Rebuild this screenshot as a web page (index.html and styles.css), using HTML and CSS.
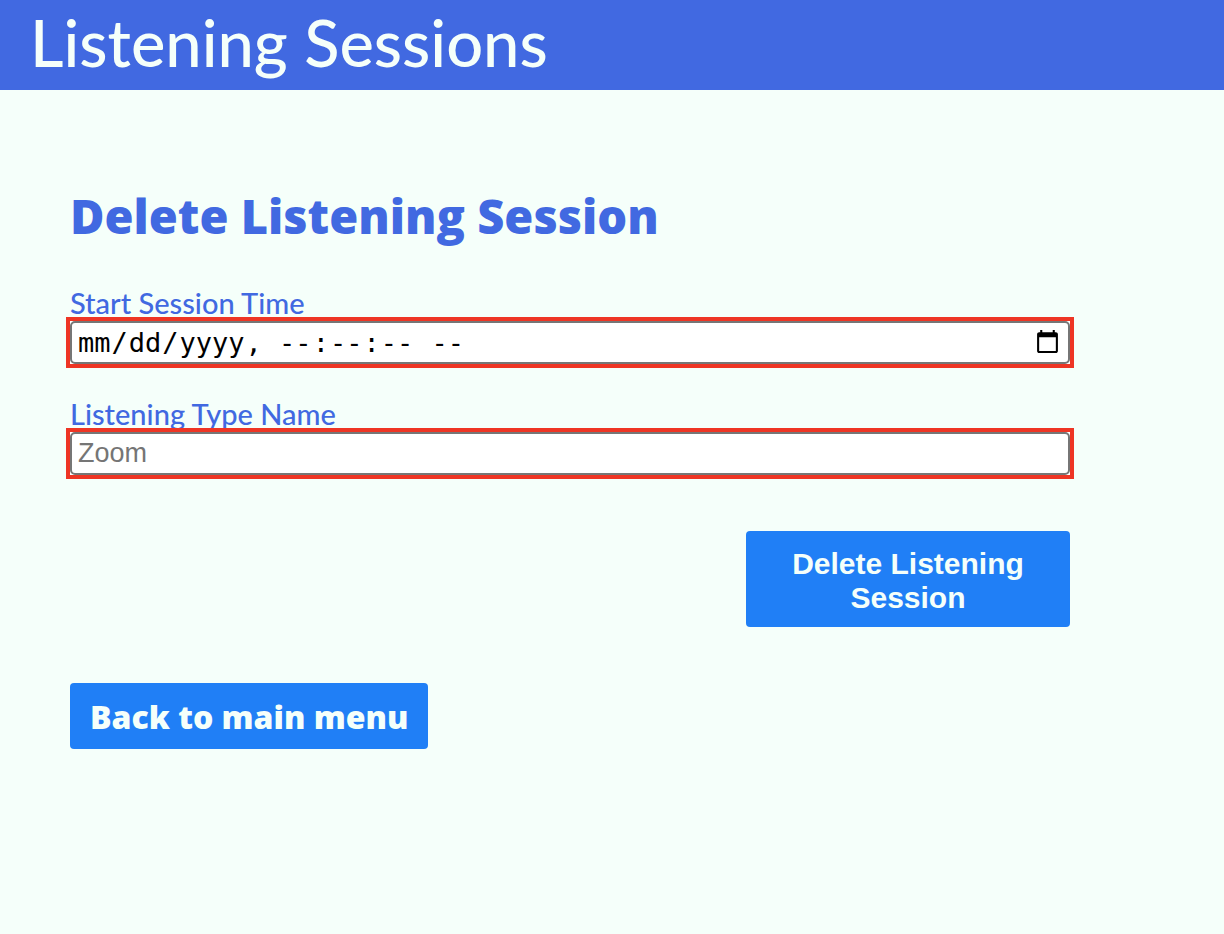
FILE: index.html
```html
<!DOCTYPE html>
<html lang="en">
<head>
<meta charset="utf-8">
<meta name="viewport" content="width=device-width, initial-scale=1">
<title>Listening Sessions</title>
<link rel="stylesheet" href="styles.css">
</head>
<body>
<header class="banner"><h1 class="banner-title">Listening Sessions</h1></header>
<main class="content">
  <h2 class="title">Delete Listening Session</h2>
  <form class="form">
    <div class="field">
      <label class="label" for="start">Start Session Time</label>
      <div class="frame"><input class="input input-date" type="datetime-local" step="1" id="start" name="start" required></div>
    </div>
    <div class="field">
      <label class="label" for="type">Listening Type Name</label>
      <div class="frame"><input class="input" type="text" id="type" name="type" placeholder="Zoom" required></div>
    </div>
    <button class="button submit" type="submit">Delete Listening Session</button>
  </form>
  <a class="button back" href="#">Back to main menu</a>
</main>
</body>
</html>
```

FILE: styles.css
```css
* {
  box-sizing: border-box;
}

body {
  margin: 0;
  background: #f5fffa;
  color: #4169e1;
  font-family: "Gill Sans", Lato, sans-serif;
}

.banner {
  padding: 0 30px 6px;
  background: #4169e1;
  color: #f5fffa;
}

.banner-title {
  margin: 0;
  font-size: 65px;
  font-weight: 500;
  line-height: 84px;
}

.content {
  max-width: 1140px;
  padding: 98px 70px 40px;
}

.title {
  margin: 0 0 41px;
  font-family: "Gill Sans", "Open Sans", sans-serif;
  font-size: 47px;
  font-weight: 800;
  line-height: 56px;
}

.form {
  display: flex;
  flex-direction: column;
}

.field {
  display: flex;
  flex-direction: column;
  margin-bottom: 28px;
}

.label {
  padding-top: 4px;
  font-size: 29px;
  font-weight: 500;
  line-height: 28px;
}

.frame {
  position: relative;
  display: flex;
  margin: 0 -4px;
  border: 4px solid #ee3524;
  background: #fff;
}

.input {
  width: 100%;
  height: 43px;
  padding: 2px 6px;
  border: 2px solid #767676;
  border-radius: 5px;
  background: #fff;
  color: #000;
  font-family: "Liberation Sans", Arial, sans-serif;
  font-size: 27px;
}

.input::placeholder {
  color: #757575;
}

.input-date {
  padding: 2px 5px;
  font-family: "DejaVu Sans Mono", monospace;
}

.button {
  border: 0;
  border-radius: 4px;
  background: #207ff6;
  color: #f5fffa;
  text-align: center;
  text-decoration: none;
  cursor: pointer;
}

.submit {
  align-self: flex-end;
  width: 324px;
  margin: 24px 0 56px;
  padding: 16px 32px 12px;
  font-family: "Liberation Sans", Arial, sans-serif;
  font-size: 30px;
  font-weight: 700;
  line-height: 34px;
}

.back {
  display: inline-block;
  padding: 17px 20px 15px;
  font-family: "Gill Sans", "Open Sans", sans-serif;
  font-size: 32px;
  font-weight: 800;
  line-height: 34px;
}
```
